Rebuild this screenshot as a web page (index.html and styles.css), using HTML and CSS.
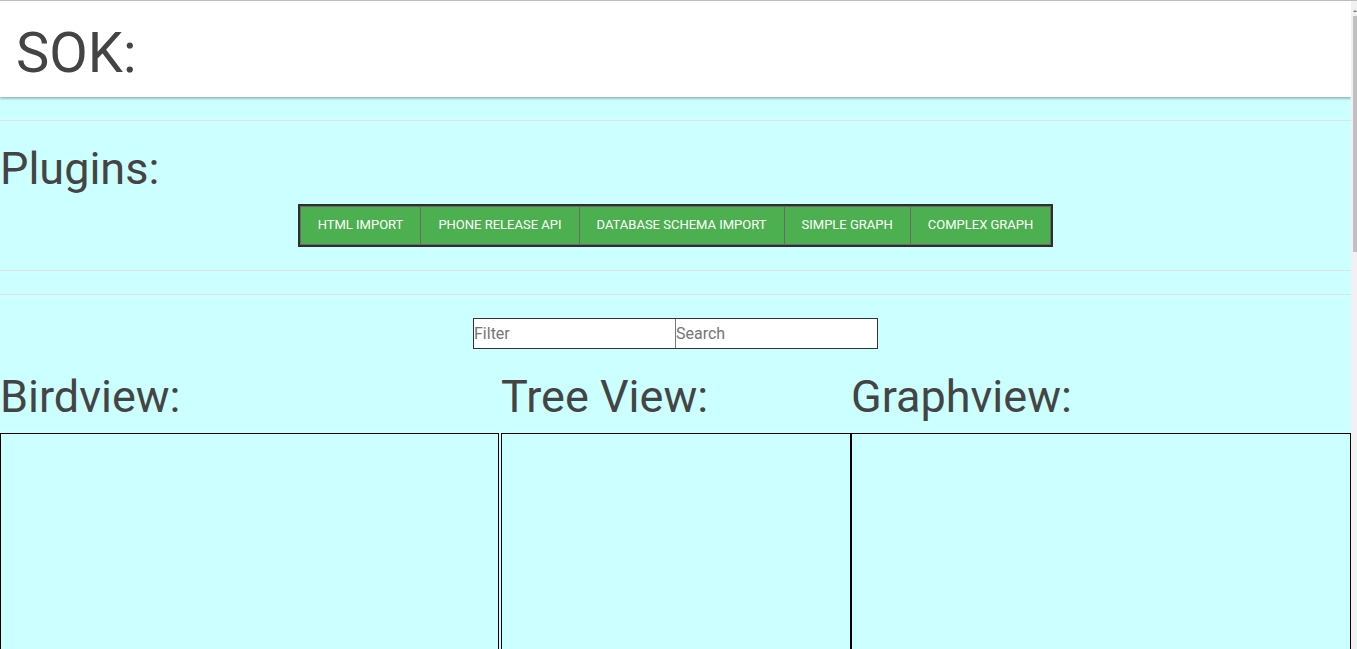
FILE: index.html
```html
<!DOCTYPE html>
<html lang="en">
<head>
<meta charset="utf-8">
<title>SOK</title>
<link rel="stylesheet" href="styles.css">
</head>
<body>
<div class="page">
  <header class="top">
    <h1 class="title">SOK:</h1>
  </header>
  <hr class="divider first">
  <section class="plugins">
    <h2 class="heading">Plugins:</h2>
    <div class="bar">
      <button class="btn">HTML Import</button>
      <button class="btn">Phone Release API</button>
      <button class="btn">Database Schema Import</button>
      <button class="btn">Simple Graph</button>
      <button class="btn">Complex Graph</button>
    </div>
  </section>
  <hr class="divider second">
  <hr class="divider third">
  <div class="search">
    <input class="field" type="text" placeholder="Filter">
    <input class="field sep" type="text" placeholder="Search">
  </div>
  <main class="views">
    <h2 class="heading col">Birdview:</h2>
    <h2 class="heading col">Tree View:</h2>
    <h2 class="heading col">Graphview:</h2>
    <div class="box bird"></div>
    <div class="box tree"></div>
    <div class="box graph"></div>
  </main>
</div>
<div class="scrollbar"><div class="arrow"></div><div class="thumb"></div></div>
</body>
</html>
```
FILE: styles.css
```css
html {
  overflow: hidden;
}
body {
  margin: 0;
  border-top: 1px solid #bdbdbd;
  background: #ccffff;
  font-family: Roboto, "Liberation Sans", sans-serif;
  color: #444;
}
.page {
  width: 1351px;
}
.top {
  height: 96px;
  box-sizing: border-box;
  padding: 23px 0 0 16px;
  background: #fff;
  box-shadow: 0 2px 2px 0 rgba(0,0,0,0.14), 0 1px 3px 0 rgba(0,0,0,0.2);
  position: relative;
}
.title {
  margin: 0;
  font-size: 56px;
  line-height: 58px;
  font-weight: 400;
}
.divider {
  margin: 0;
  border: 0;
  height: 1px;
  background: #e2e2e2;
}
.first { margin-top: 23px; }
.second { margin-top: 23px; }
.third { margin-top: 23px; }
.heading {
  margin: 0;
  font-size: 45px;
  line-height: 44px;
  font-weight: 400;
}
.plugins {
  padding-top: 26px;
}
.bar {
  display: flex;
  width: max-content;
  margin: 13px auto 0;
  border: 2px solid #2f2f2f;
}
.btn {
  height: 39px;
  padding: 0 17px 2px;
  margin: 0;
  background: #4caf50;
  color: #fff;
  font-family: Roboto, "Liberation Sans", sans-serif;
  font-size: 13px;
  text-transform: uppercase;
  border: 1px solid #6a6a6a;
  border-right: 0;
}
.btn:last-child {
  border-right: 1px solid #6a6a6a;
}
.search {
  display: flex;
  width: max-content;
  margin: 23px auto 0;
  border: 1px solid #333;
}
.field {
  width: 201px;
  height: 29px;
  box-sizing: border-box;
  margin: 0;
  padding: 0;
  border: 0;
  background: #fff;
  font-family: Roboto, "Liberation Sans", sans-serif;
  font-size: 16px;
  color: #333;
  outline: none;
}
.field::placeholder {
  color: #757575;
}
.field.sep {
  border-left: 1px solid #7a7a7a;
  width: 202px;
}
.views {
  display: grid;
  grid-template-columns: 501px 350px 500px;
  row-gap: 14px;
  padding-top: 26px;
}
.box {
  height: 400px;
  border: 1px solid #000;
  box-sizing: border-box;
}
.bird { width: 499px; }
.scrollbar {
  position: fixed;
  top: 1px;
  right: 0;
  width: 6px;
  bottom: 0;
  background: #f1f1f1;
}
.arrow {
  position: absolute;
  top: 9px;
  left: 2px;
  width: 0;
  height: 0;
  border-left: 2px solid transparent;
  border-right: 2px solid transparent;
  border-bottom: 2px solid #777;
}
.thumb {
  position: absolute;
  top: 15px;
  left: 2px;
  width: 4px;
  height: 236px;
  background: #c1c1c1;
}
```
